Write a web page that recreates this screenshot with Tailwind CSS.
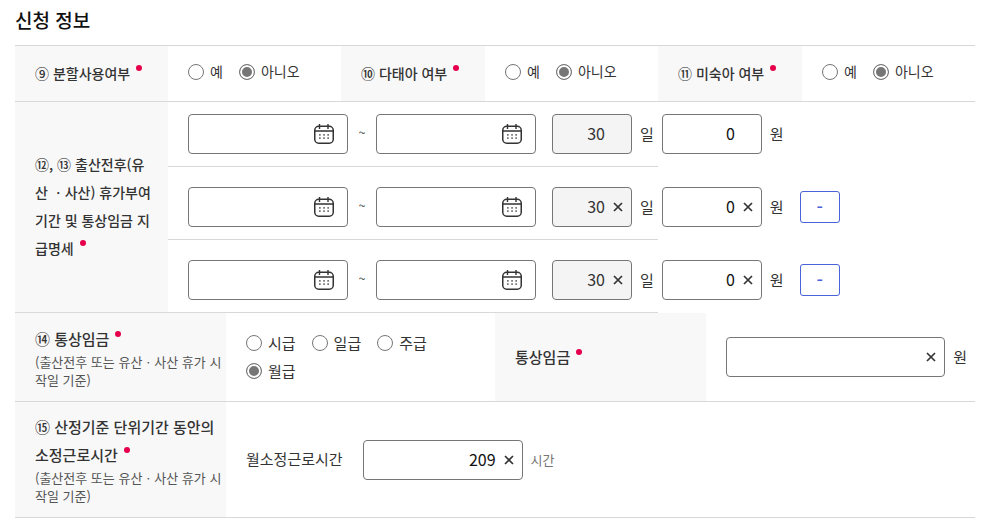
<!DOCTYPE html>
<html lang="ko">
  <head>
    <meta charset="UTF-8" />
    <meta name="viewport" content="width=device-width, initial-scale=1.0" />
    <title>신청 정보</title>
    <script src="https://cdn.jsdelivr.net/npm/@tailwindcss/browser@4"></script>
  </head>
  <body class="bg-white text-[#333] font-['Noto_Sans_CJK_KR',sans-serif] pl-[15px] pr-[27px]">
    <!-- shared icons -->
    <svg class="hidden">
      <symbol id="calendar" viewBox="0 0 20 20">
        <rect x="0.75" y="2.25" width="18.5" height="17" rx="4" fill="none" stroke="#333" stroke-width="1.5" />
        <path d="M1 7h18M5.5 0v5M14 0v5" fill="none" stroke="#333" stroke-width="1.4" />
        <path d="M5 10h1.7v1.7H5zM9.2 10h1.7v1.7H9.200zM13.300 10h1.7v1.7h-1.700zM5 13.300h1.7v1.7H5zM9.200 13.300h1.7v1.7H9.200zM13.300 13.300h1.7v1.7h-1.700z" fill="#777" />
      </symbol>
      <symbol id="clear" viewBox="0 0 10 10">
        <path d="M1 1l8 8M9 1l-8 8" fill="none" stroke="#333" stroke-width="1.7" />
      </symbol>
    </svg>

    <h1 class="pt-1.5 pb-[11px] text-[19px] leading-7 font-medium text-[#111]">신청 정보</h1>

    <form class="border-t border-[#d8d8d8]">
      <div class="grid grid-cols-[153px_1fr_144px_1fr_144px_1fr] min-h-14 border-b border-[#d8d8d8]">
        <div id="splitLabel" class="flex items-center bg-[#f8f8f8] px-5 pb-0.5 text-sm font-medium whitespace-nowrap">
          <span>⑨ 분할사용여부<i class="inline-block size-1.5 ml-1.5 rounded-full bg-[#e6004c] align-[8px]"></i></span>
        </div>
        <div role="radiogroup" aria-labelledby="splitLabel" class="flex items-start gap-4 px-5 pt-3 text-sm">
          <label class="flex items-center gap-1.5 h-7"><input type="radio" name="split" class="appearance-none size-4 rounded-full border border-[#767676] checked:bg-[#767676] checked:shadow-[inset_0_0_0_2px_#fff]" /><span class="pb-0.5">예</span></label>
          <label class="flex items-center gap-1.5 h-7"><input type="radio" name="split" checked class="appearance-none size-4 rounded-full border border-[#767676] checked:bg-[#767676] checked:shadow-[inset_0_0_0_2px_#fff]" /><span class="pb-0.5">아니오</span></label>
        </div>
        <div id="multipleLabel" class="flex items-center bg-[#f8f8f8] px-5 pb-0.5 text-sm font-medium whitespace-nowrap">
          <span>⑩ 다태아 여부<i class="inline-block size-1.5 ml-1.5 rounded-full bg-[#e6004c] align-[8px]"></i></span>
        </div>
        <div role="radiogroup" aria-labelledby="multipleLabel" class="flex items-start gap-4 px-5 pt-3 text-sm">
          <label class="flex items-center gap-1.5 h-7"><input type="radio" name="multiple" class="appearance-none size-4 rounded-full border border-[#767676] checked:bg-[#767676] checked:shadow-[inset_0_0_0_2px_#fff]" /><span class="pb-0.5">예</span></label>
          <label class="flex items-center gap-1.5 h-7"><input type="radio" name="multiple" checked class="appearance-none size-4 rounded-full border border-[#767676] checked:bg-[#767676] checked:shadow-[inset_0_0_0_2px_#fff]" /><span class="pb-0.5">아니오</span></label>
        </div>
        <div id="prematureLabel" class="flex items-center bg-[#f8f8f8] px-5 pb-0.5 text-sm font-medium whitespace-nowrap">
          <span>⑪ 미숙아 여부<i class="inline-block size-1.5 ml-1.5 rounded-full bg-[#e6004c] align-[8px]"></i></span>
        </div>
        <div role="radiogroup" aria-labelledby="prematureLabel" class="flex items-start gap-4 px-5 pt-3 text-sm">
          <label class="flex items-center gap-1.5 h-7"><input type="radio" name="premature" class="appearance-none size-4 rounded-full border border-[#767676] checked:bg-[#767676] checked:shadow-[inset_0_0_0_2px_#fff]" /><span class="pb-0.5">예</span></label>
          <label class="flex items-center gap-1.5 h-7"><input type="radio" name="premature" checked class="appearance-none size-4 rounded-full border border-[#767676] checked:bg-[#767676] checked:shadow-[inset_0_0_0_2px_#fff]" /><span class="pb-0.5">아니오</span></label>
        </div>
      </div>

      <!-- leave periods -->
      <div class="grid grid-cols-[153px_1fr_144px_1fr_144px_1fr]">
        <div class="flex items-center bg-[#f8f8f8] border-b border-[#d8d8d8] pl-5 pb-0.5 text-sm leading-7 font-medium whitespace-nowrap">
          <span>⑫, ⑬ 출산전후(유<br />산 ㆍ사산) 휴가부여<br />기간 및 통상임금 지<br />급명세<i class="inline-block size-1.5 ml-1.5 rounded-full bg-[#e6004c] align-[8px]"></i></span>
        </div>
        <div class="col-span-3 text-[15px]">
          <div class="flex items-center border-b border-[#d8d8d8] pl-5 py-3">
            <div class="flex shrink-0 items-center w-40 h-10 rounded border border-[#767676] pr-[13px]">
              <input type="text" aria-label="시작일" class="flex-1 min-w-0 h-full pl-3 outline-none" />
              <button type="button" aria-label="시작일 달력"><svg class="size-5"><use href="#calendar" /></svg></button>
            </div>
            <span class="w-7 shrink-0 pb-1 text-center text-xs">~</span>
            <div class="flex shrink-0 items-center w-40 h-10 rounded border border-[#767676] pr-[13px]">
              <input type="text" aria-label="종료일" class="flex-1 min-w-0 h-full pl-3 outline-none" />
              <button type="button" aria-label="종료일 달력"><svg class="size-5"><use href="#calendar" /></svg></button>
            </div>
            <div class="flex shrink-0 items-center w-20 h-10 ml-4 rounded border border-[#767676] bg-[#f4f4f4] pr-[26px]">
              <input type="text" id="days1" value="30" readonly class="flex-1 min-w-0 h-full pb-0.5 text-base text-right outline-none" />
            </div>
            <label for="days1" class="shrink-0 mx-2">일</label>
            <div class="flex shrink-0 items-center w-25 h-10 rounded border border-[#767676] pr-[26px]">
              <input type="text" id="pay1" value="0" class="flex-1 min-w-0 h-full pb-0.5 text-base text-right text-[#111] outline-none" />
            </div>
            <label for="pay1" class="shrink-0 ml-2">원</label>
          </div>
          <div class="flex items-center border-b border-[#d8d8d8] pl-5 pt-5 pb-3">
            <div class="flex shrink-0 items-center w-40 h-10 rounded border border-[#767676] pr-[13px]">
              <input type="text" aria-label="시작일" class="flex-1 min-w-0 h-full pl-3 outline-none" />
              <button type="button" aria-label="시작일 달력"><svg class="size-5"><use href="#calendar" /></svg></button>
            </div>
            <span class="w-7 shrink-0 pb-1 text-center text-xs">~</span>
            <div class="flex shrink-0 items-center w-40 h-10 rounded border border-[#767676] pr-[13px]">
              <input type="text" aria-label="종료일" class="flex-1 min-w-0 h-full pl-3 outline-none" />
              <button type="button" aria-label="종료일 달력"><svg class="size-5"><use href="#calendar" /></svg></button>
            </div>
            <div class="flex shrink-0 items-center w-20 h-10 ml-4 rounded border border-[#767676] bg-[#f4f4f4] pr-2">
              <input type="text" id="days2" value="30" readonly class="flex-1 min-w-0 h-full pb-0.5 text-base text-right outline-none" />
              <button type="button" aria-label="지우기" class="pl-2"><svg class="size-2.5"><use href="#clear" /></svg></button>
            </div>
            <label for="days2" class="shrink-0 mx-2">일</label>
            <div class="flex shrink-0 items-center w-25 h-10 rounded border border-[#767676] pr-2">
              <input type="text" id="pay2" value="0" class="flex-1 min-w-0 h-full pb-0.5 text-base text-right text-[#111] outline-none" />
              <button type="button" aria-label="지우기" class="pl-2"><svg class="size-2.5"><use href="#clear" /></svg></button>
            </div>
            <label for="pay2" class="shrink-0 ml-2">원</label>
            <button type="button" class="shrink-0 w-10 h-8 ml-4 pb-0.5 rounded-[3px] border border-[#4a63d9] text-lg leading-none font-medium text-[#4a63d9]">-</button>
          </div>
          <div class="flex items-center border-b border-[#d8d8d8] pl-5 pt-5 pb-3">
            <div class="flex shrink-0 items-center w-40 h-10 rounded border border-[#767676] pr-[13px]">
              <input type="text" aria-label="시작일" class="flex-1 min-w-0 h-full pl-3 outline-none" />
              <button type="button" aria-label="시작일 달력"><svg class="size-5"><use href="#calendar" /></svg></button>
            </div>
            <span class="w-7 shrink-0 pb-1 text-center text-xs">~</span>
            <div class="flex shrink-0 items-center w-40 h-10 rounded border border-[#767676] pr-[13px]">
              <input type="text" aria-label="종료일" class="flex-1 min-w-0 h-full pl-3 outline-none" />
              <button type="button" aria-label="종료일 달력"><svg class="size-5"><use href="#calendar" /></svg></button>
            </div>
            <div class="flex shrink-0 items-center w-20 h-10 ml-4 rounded border border-[#767676] bg-[#f4f4f4] pr-2">
              <input type="text" id="days3" value="30" readonly class="flex-1 min-w-0 h-full pb-0.5 text-base text-right outline-none" />
              <button type="button" aria-label="지우기" class="pl-2"><svg class="size-2.5"><use href="#clear" /></svg></button>
            </div>
            <label for="days3" class="shrink-0 mx-2">일</label>
            <div class="flex shrink-0 items-center w-25 h-10 rounded border border-[#767676] pr-2">
              <input type="text" id="pay3" value="0" class="flex-1 min-w-0 h-full pb-0.5 text-base text-right text-[#111] outline-none" />
              <button type="button" aria-label="지우기" class="pl-2"><svg class="size-2.5"><use href="#clear" /></svg></button>
            </div>
            <label for="pay3" class="shrink-0 ml-2">원</label>
            <button type="button" class="shrink-0 w-10 h-8 ml-4 pb-0.5 rounded-[3px] border border-[#4a63d9] text-lg leading-none font-medium text-[#4a63d9]">-</button>
          </div>
        </div>
      </div>

      <!-- ordinary wage -->
      <div class="grid grid-cols-[211px_1fr_211px_1fr] border-b border-[#d8d8d8] text-[15px]">
        <div class="bg-[#f8f8f8] pl-5 py-3 whitespace-nowrap">
          <p id="wageType" class="leading-7 font-medium">⑭ 통상임금<i class="inline-block size-1.5 ml-1.5 rounded-full bg-[#e6004c] align-[8px]"></i></p>
          <p class="text-[13px] leading-[18px] text-[#555]">(출산전후 또는 유산ㆍ사산 휴가 시<br />작일 기준)</p>
        </div>
        <div role="radiogroup" aria-labelledby="wageType" class="flex flex-wrap content-center gap-x-4 px-5">
          <label class="flex items-center gap-1.5 h-7"><input type="radio" name="wage" class="appearance-none size-4 rounded-full border border-[#767676] checked:bg-[#767676] checked:shadow-[inset_0_0_0_2px_#fff]" />시급</label>
          <label class="flex items-center gap-1.5 h-7"><input type="radio" name="wage" class="appearance-none size-4 rounded-full border border-[#767676] checked:bg-[#767676] checked:shadow-[inset_0_0_0_2px_#fff]" />일급</label>
          <label class="flex items-center gap-1.5 h-7"><input type="radio" name="wage" class="appearance-none size-4 rounded-full border border-[#767676] checked:bg-[#767676] checked:shadow-[inset_0_0_0_2px_#fff]" />주급</label>
          <label class="flex items-center gap-1.5 h-7"><input type="radio" name="wage" checked class="appearance-none size-4 rounded-full border border-[#767676] checked:bg-[#767676] checked:shadow-[inset_0_0_0_2px_#fff]" />월급</label>
        </div>
        <div class="flex items-center bg-[#f8f8f8] pl-5 font-medium">
          <label for="wageAmount">통상임금<i class="inline-block size-1.5 ml-1.5 rounded-full bg-[#e6004c] align-[8px]"></i></label>
        </div>
        <div class="flex items-center gap-2 pl-5 pr-2">
          <div class="flex flex-1 items-center h-10 rounded border border-[#767676] pr-2">
            <input type="text" id="wageAmount" class="flex-1 min-w-0 h-full pb-0.5 text-base text-right text-[#111] outline-none" />
            <button type="button" aria-label="지우기" class="pl-2"><svg class="size-2.5"><use href="#clear" /></svg></button>
          </div>
          <span>원</span>
        </div>
      </div>

      <!-- contracted working hours -->
      <div class="grid grid-cols-[211px_1fr] border-b border-[#d8d8d8] text-[15px]">
        <div class="bg-[#f8f8f8] pl-5 pt-[11px] pb-3 whitespace-nowrap">
          <p class="leading-7 font-medium">⑮ 산정기준 단위기간 동안의<br />소정근로시간<i class="inline-block size-1.5 ml-1.5 rounded-full bg-[#e6004c] align-[8px]"></i></p>
          <p class="text-[13px] leading-[18px] text-[#555]">(출산전후 또는 유산ㆍ사산 휴가 시<br />작일 기준)</p>
        </div>
        <div class="flex items-center pl-5">
          <label for="hours">월소정근로시간</label>
          <div class="flex items-center w-40 h-10 ml-5 rounded border border-[#767676] pr-2">
            <input type="text" id="hours" value="209" class="flex-1 min-w-0 h-full pb-0.5 text-base text-right text-[#111] outline-none" />
            <button type="button" aria-label="지우기" class="pl-2"><svg class="size-2.5"><use href="#clear" /></svg></button>
          </div>
          <span class="ml-2 text-[13px] text-[#767676]">시간</span>
        </div>
      </div>
    </form>
  </body>
</html>
